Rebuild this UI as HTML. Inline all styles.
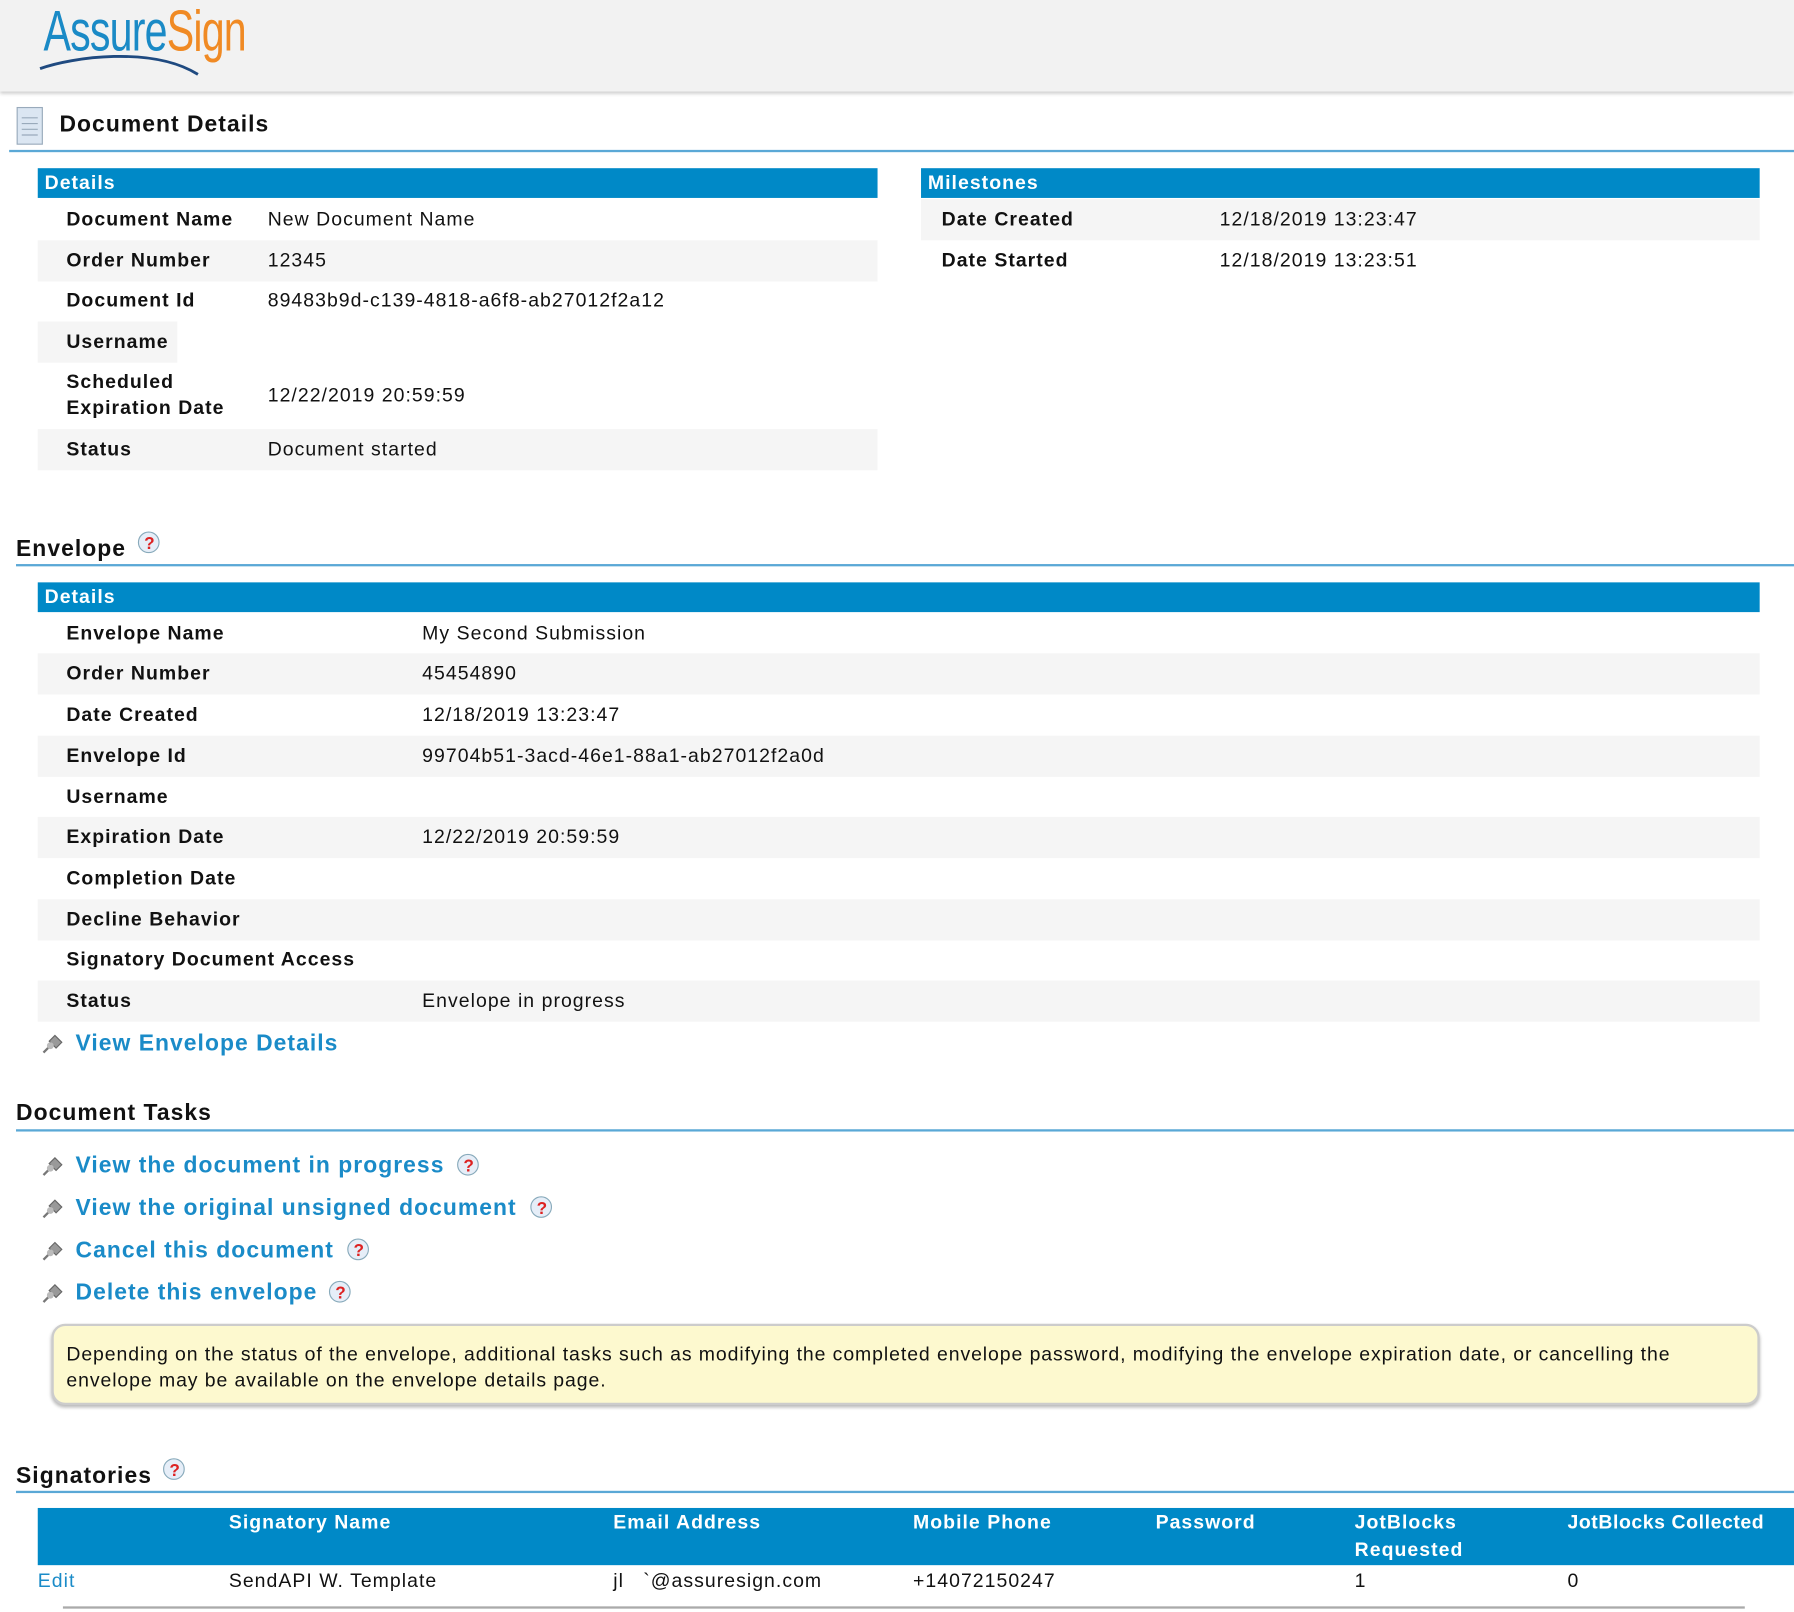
<!DOCTYPE html>
<html><head><meta charset="utf-8"><style>
*{margin:0;padding:0;box-sizing:border-box}
body{width:1794px;height:1612px;overflow:hidden;background:#fff;font-family:"Liberation Sans",Arial,sans-serif;color:#111}
#w{position:absolute;left:0;top:0;width:1568px;height:1409px;transform:scale(1.14413);transform-origin:0 0;letter-spacing:0.9px}
.a{position:absolute;white-space:nowrap}
.hdr{position:absolute;left:0;top:0;width:1568px;height:80px;background:#f2f2f2;box-shadow:0 2px 3px #ccc}
.h2{position:absolute;font-weight:bold;font-size:20px;color:#111}
.ln{position:absolute;height:2px;background:#5aa8d6}
.bar{position:absolute;background:#0089c7;color:#fff;font-weight:bold;font-size:17px;padding-left:6px;line-height:26px}
.row{position:absolute;height:36px;font-size:17px;line-height:36px}
.g{background:#f5f5f5}
.lb{position:absolute;left:25px;font-weight:bold}
.lk{position:absolute;font-size:20px;font-weight:bold;color:#1a8bc8;white-space:nowrap}
.th{position:absolute;color:#fff;font-weight:bold;font-size:17px;line-height:24px}
</style></head><body><div id="w">
<div class="hdr"></div>
<div class="a" style="left:38px;top:-2px;font-size:50px;transform:scaleX(.72);transform-origin:0 0;letter-spacing:-1px"><span style="color:#1a8ac6">Assure</span><span style="color:#f08a24">Sign</span></div>
<svg class="a" style="left:33px;top:40px" width="150" height="30"><path d="M2 20 C30 10 100 0 140 25" stroke="#1f4a80" stroke-width="2.5" fill="none"/></svg>
<svg class="a" style="left:14px;top:93px" width="26" height="36"><rect x="1" y="1" width="22" height="32" fill="#dbe6f2" stroke="#9ab"/><g stroke="#9ab"><line x1="5" y1="10" x2="19" y2="10"/><line x1="5" y1="15" x2="19" y2="15"/><line x1="5" y1="20" x2="19" y2="20"/><line x1="5" y1="25" x2="19" y2="25"/></g></svg>
<div class="h2" style="left:52px;top:98px">Document Details</div>
<div class="ln" style="left:8px;top:131px;width:1560px"></div>

<div class="bar" style="left:33px;top:147px;width:734px">Details</div>
<div class="row" style="left:33px;top:174px;width:734px"><span class="lb">Document Name</span><span class="a" style="left:201px">New Document Name</span></div>
<div class="row g" style="left:33px;top:210px;width:734px"><span class="lb">Order Number</span><span class="a" style="left:201px">12345</span></div>
<div class="row" style="left:33px;top:245px;width:734px"><span class="lb">Document Id</span><span class="a" style="left:201px">89483b9d-c139-4818-a6f8-ab27012f2a12</span></div>
<div class="row g" style="left:33px;top:281px;width:122px"><span class="lb">Username</span></div>
<div class="row" style="left:33px;top:316px;width:734px;height:59px;line-height:23px"><span class="lb" style="top:6px">Scheduled<br>Expiration Date</span><span class="a" style="left:201px;top:18px">12/22/2019 20:59:59</span></div>
<div class="row g" style="left:33px;top:375px;width:734px"><span class="lb">Status</span><span class="a" style="left:201px">Document started</span></div>

<div class="bar" style="left:805px;top:147px;width:733px">Milestones</div>
<div class="row g" style="left:805px;top:174px;width:733px"><span class="lb" style="left:18px">Date Created</span><span class="a" style="left:261px">12/18/2019 13:23:47</span></div>
<div class="row" style="left:805px;top:210px;width:733px"><span class="lb" style="left:18px">Date Started</span><span class="a" style="left:261px">12/18/2019 13:23:51</span></div>

<div class="h2" style="left:14px;top:469px">Envelope</div>
<svg class="a hp" style="left:118px;top:463px" width="24" height="26"><circle cx="12" cy="11" r="9" fill="#e6eef8" stroke="#8ab"/><text x="8" y="17" font-size="15" font-weight="bold" fill="#d22" font-family="Liberation Sans">?</text></svg>
<div class="ln" style="left:14px;top:493px;width:1554px"></div>
<div class="bar" style="left:33px;top:509px;width:1505px">Details</div>
<div class="row" style="left:33px;top:536px;width:1505px"><span class="lb">Envelope Name</span><span class="a" style="left:336px">My Second Submission</span></div>
<div class="row g" style="left:33px;top:571px;width:1505px"><span class="lb">Order Number</span><span class="a" style="left:336px">45454890</span></div>
<div class="row" style="left:33px;top:607px;width:1505px"><span class="lb">Date Created</span><span class="a" style="left:336px">12/18/2019 13:23:47</span></div>
<div class="row g" style="left:33px;top:643px;width:1505px"><span class="lb">Envelope Id</span><span class="a" style="left:336px">99704b51-3acd-46e1-88a1-ab27012f2a0d</span></div>
<div class="row" style="left:33px;top:679px;width:1505px"><span class="lb">Username</span></div>
<div class="row g" style="left:33px;top:714px;width:1505px"><span class="lb">Expiration Date</span><span class="a" style="left:336px">12/22/2019 20:59:59</span></div>
<div class="row" style="left:33px;top:750px;width:1505px"><span class="lb">Completion Date</span></div>
<div class="row g" style="left:33px;top:786px;width:1505px"><span class="lb">Decline Behavior</span></div>
<div class="row" style="left:33px;top:821px;width:1505px"><span class="lb">Signatory Document Access</span></div>
<div class="row g" style="left:33px;top:857px;width:1505px"><span class="lb">Status</span><span class="a" style="left:336px">Envelope in progress</span></div>

<svg class="a" style="left:35px;top:902px" width="22" height="20"><path d="M3 18 L9 12" stroke="#777" stroke-width="2"/><path d="M8 8 L13 3 L19 9 L14 14 Z" fill="#999" stroke="#666"/><circle cx="9" cy="12" r="3" fill="#bbb"/></svg>
<div class="lk" style="left:66px;top:901px">View Envelope Details</div>

<div class="h2" style="left:14px;top:962px">Document Tasks</div>
<div class="ln" style="left:14px;top:987px;width:1554px"></div>
<svg class="a" style="left:35px;top:1009px" width="22" height="20"><path d="M3 18 L9 12" stroke="#777" stroke-width="2"/><path d="M8 8 L13 3 L19 9 L14 14 Z" fill="#999" stroke="#666"/><circle cx="9" cy="12" r="3" fill="#bbb"/></svg>
<div class="lk" style="left:66px;top:1008px">View the document in progress</div>
<svg class="a" style="left:397px;top:1007px" width="24" height="26"><circle cx="12" cy="11" r="9" fill="#e6eef8" stroke="#8ab"/><text x="8" y="17" font-size="15" font-weight="bold" fill="#d22" font-family="Liberation Sans">?</text></svg>
<svg class="a" style="left:35px;top:1046px" width="22" height="20"><path d="M3 18 L9 12" stroke="#777" stroke-width="2"/><path d="M8 8 L13 3 L19 9 L14 14 Z" fill="#999" stroke="#666"/><circle cx="9" cy="12" r="3" fill="#bbb"/></svg>
<div class="lk" style="left:66px;top:1045px">View the original unsigned document</div>
<svg class="a" style="left:461px;top:1044px" width="24" height="26"><circle cx="12" cy="11" r="9" fill="#e6eef8" stroke="#8ab"/><text x="8" y="17" font-size="15" font-weight="bold" fill="#d22" font-family="Liberation Sans">?</text></svg>
<svg class="a" style="left:35px;top:1083px" width="22" height="20"><path d="M3 18 L9 12" stroke="#777" stroke-width="2"/><path d="M8 8 L13 3 L19 9 L14 14 Z" fill="#999" stroke="#666"/><circle cx="9" cy="12" r="3" fill="#bbb"/></svg>
<div class="lk" style="left:66px;top:1082px">Cancel this document</div>
<svg class="a" style="left:301px;top:1081px" width="24" height="26"><circle cx="12" cy="11" r="9" fill="#e6eef8" stroke="#8ab"/><text x="8" y="17" font-size="15" font-weight="bold" fill="#d22" font-family="Liberation Sans">?</text></svg>
<svg class="a" style="left:35px;top:1120px" width="22" height="20"><path d="M3 18 L9 12" stroke="#777" stroke-width="2"/><path d="M8 8 L13 3 L19 9 L14 14 Z" fill="#999" stroke="#666"/><circle cx="9" cy="12" r="3" fill="#bbb"/></svg>
<div class="lk" style="left:66px;top:1119px">Delete this envelope</div>
<svg class="a" style="left:285px;top:1118px" width="24" height="26"><circle cx="12" cy="11" r="9" fill="#e6eef8" stroke="#8ab"/><text x="8" y="17" font-size="15" font-weight="bold" fill="#d22" font-family="Liberation Sans">?</text></svg>

<div class="a" style="left:45px;top:1157px;width:1493px;height:71px;background:#fdf9cf;border:2px solid #ccc;border-radius:12px;box-shadow:0 2px 3px #bbb;white-space:normal;font-size:17px;line-height:23px;padding:13px 0 0 11px;letter-spacing:0.8px">Depending on the status of the envelope, additional tasks such as modifying the completed envelope password, modifying the envelope expiration date, or cancelling the<br>envelope may be available on the envelope details page.</div>

<div class="h2" style="left:14px;top:1279px">Signatories</div>
<svg class="a" style="left:140px;top:1273px" width="24" height="26"><circle cx="12" cy="11" r="9" fill="#e6eef8" stroke="#8ab"/><text x="8" y="17" font-size="15" font-weight="bold" fill="#d22" font-family="Liberation Sans">?</text></svg>
<div class="ln" style="left:14px;top:1303px;width:1554px"></div>
<div class="a" style="left:33px;top:1318px;width:1535px;height:50px;background:#0089c7"></div>
<div class="th" style="left:200px;top:1319px">Signatory Name</div>
<div class="th" style="left:536px;top:1319px">Email Address</div>
<div class="th" style="left:798px;top:1319px">Mobile Phone</div>
<div class="th" style="left:1010px;top:1319px">Password</div>
<div class="th" style="left:1184px;top:1319px">JotBlocks<br>Requested</div>
<div class="th" style="left:1370px;top:1319px;letter-spacing:0.5px">JotBlocks Collected</div>
<div class="a" style="left:33px;top:1372px;font-size:17px;color:#1a8bc8">Edit</div>
<div class="a" style="left:200px;top:1372px;font-size:17px">SendAPI W. Template</div>
<div class="a" style="left:536px;top:1372px;font-size:17px">jl &nbsp;&nbsp;`@assuresign.com</div>
<div class="a" style="left:798px;top:1372px;font-size:17px">+14072150247</div>
<div class="a" style="left:1184px;top:1372px;font-size:17px">1</div>
<div class="a" style="left:1370px;top:1372px;font-size:17px">0</div>
<div class="a" style="left:55px;top:1404px;width:1470px;height:2px;background:#aaa"></div>
</div></body></html>
